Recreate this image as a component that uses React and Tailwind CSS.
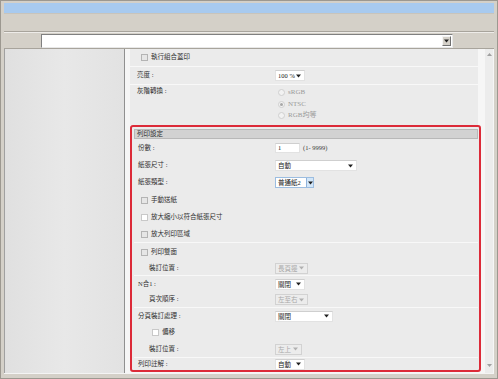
import React from 'react'

const font = { fontFamily: '"Liberation Serif", "Noto Sans CJK TC", serif' }

function Arrow({ disabled }) {
  return (
    <svg width="5" height="4" viewBox="0 0 5 4" className="shrink-0">
      <path d="M0 0.5h5L2.5 3.5z" fill={disabled ? '#b0b0b0' : '#202020'} />
    </svg>
  )
}

function Select({ w, value, disabled, focus }) {
  if (focus) {
    return (
      <div className={`h-[11px] flex items-stretch bg-white border border-[#9cbde0] ${w}`}>
        <span className="flex-1 pl-[2px] leading-[9px] text-[#202020] whitespace-nowrap">{value}</span>
        <span className="w-[7px] shrink-0 flex items-center justify-center bg-[#d2e6f8] border-l border-[#8fb3dc]"><Arrow /></span>
      </div>
    )
  }
  return (
    <div className={`h-[11px] flex items-center justify-between pl-[2px] pr-[3px] border ${disabled ? 'bg-[#ececec] border-[#d2d2d2] text-[#a8a8a8]' : 'bg-white border-[#e2e2e2] border-t-[#cfcfcf] text-[#202020]'} ${w}`}>
      <span className="leading-[9px] whitespace-nowrap">{value}</span>
      <Arrow disabled={disabled} />
    </div>
  )
}

function Check({ white }) {
  return <span className={`w-[7px] h-[7px] shrink-0 border ${white ? 'border-[#c8c8c8] bg-white' : 'border-[#b4b4b4] bg-[#e6e6e6]'}`} />
}

function Radio({ checked, label }) {
  return (
    <div className="h-[11.5px] flex items-center gap-[3px] text-[#9a9a9a] text-[7px]">
      <span className="w-[7px] h-[7px] rounded-full border border-[#d0d0d0] bg-[#f2f2f2] flex items-center justify-center">
        {checked && <span className="w-[3px] h-[3px] rounded-full bg-[#a8a8a8]" />}
      </span>
      <span>{label}</span>
    </div>
  )
}

function Row({ h, label, indent, children, col = 'w-[137px]', pl = 'pl-[4px]' }) {
  return (
    <div className={`flex items-center ${h} ${pl}`}>
      <span className={`${col} shrink-0 text-[#303030] whitespace-nowrap ${indent ? 'pl-[11px]' : ''}`}>{label}</span>
      {children}
    </div>
  )
}

function CheckRow({ h, label, white, indent }) {
  return (
    <div className={`flex items-center ${h} ${indent ? 'pl-[18px]' : 'pl-[7px]'} gap-[2px] text-[#303030]`}>
      <Check white={white} />
      <span className="ml-[1px] whitespace-nowrap">{label}</span>
    </div>
  )
}

export default function App() {
  return (
    <div className="w-[498px] h-[379px] bg-[#d4d0c8] border border-[#9c9890] flex flex-col text-[6.5px] leading-none" style={font}>
      <div className="h-[2px]" />
      <div className="h-[11px] mx-[3px] bg-[#a8caef] border-b border-[#c8c4bc]" />
      <div className="h-[18px] mx-[3px] bg-[#d4d0c8] border-b border-[#a8a49c]" />
      <div className="h-[16px] mx-[3px] flex items-center pl-[37px] pr-[41px] border-t border-white/60">
        <div className="flex-1 h-[14px] bg-white border border-[#808080] border-r-[#e8e8e8] border-b-[#e8e8e8] flex justify-end items-center pr-[1px]">
          <span className="w-[9px] h-[10px] bg-[#d4d0c8] border border-[#f4f4f4] border-r-[#707070] border-b-[#707070] flex items-center justify-center"><Arrow /></span>
        </div>
      </div>
      <div className="flex-1 mx-[3px] flex border-t border-[#a8a49c] min-h-0">
        <div className="w-[121px] bg-gradient-to-r from-[#e0e0e0] via-[#e8e8e8] to-[#e2e2e2] border-l border-[#a0a0a0] border-r border-r-[#909090]" />
        <div className="flex-1 bg-[#f6f6f6] flex">
          <div className="w-[351px] ml-[5px] flex flex-col">
            <div className="w-[348px] bg-[#ebebeb]">
              <div className="h-[18px] flex items-center pl-[11px] gap-[2px] border-b border-[#f8f8f8] text-[#303030]">
                <Check />
                <span className="ml-[1px]">執行組合蓋印</span>
              </div>
              <Row h="h-[18px] border-b border-[#f8f8f8]" label="亮度 :" col="w-[138px]" pl="pl-[7px]">
                <Select w="w-[30px]" value="100 %" />
              </Row>
              <div className="h-[40px] flex pl-[7px] pt-[2px]">
                <span className="w-[138px] shrink-0 text-[#303030] pt-[1px]">灰階轉換 :</span>
                <div className="pl-[3px]">
                  <Radio label="sRGB" />
                  <Radio label="NTSC" checked />
                  <Radio label="RGB均等" />
                </div>
              </div>
            </div>
            <div className="border-2 border-[#dc2a38] rounded-[3px] bg-[#ebebeb] pt-[2px] pl-[2px] pr-[1px]">
              <div className="h-[10px] bg-[#d2d2d2] border border-[#b8b8b8] flex items-center pl-[2px] text-[#303030]">列印設定</div>
              <div className="border-b border-[#f8f8f8]">
                <Row h="h-[18px]" label="份數 :">
                  <span className="w-[25px] h-[10px] bg-white border border-[#e2e2e2] border-t-[#cfcfcf] pl-[2px] leading-[8px] text-[#202020]">1</span>
                  <span className="ml-[3px] text-[#404040]">(1- 9999)</span>
                </Row>
                <Row h="h-[17px]" label="紙張尺寸 :"><Select w="w-[82px]" value="自動" /></Row>
                <Row h="h-[17px]" label="紙張類型 :"><Select w="w-[39px]" value="普通紙2" focus /></Row>
                <CheckRow h="h-[18px]" label="手動送紙" />
                <CheckRow h="h-[17px]" label="放大縮小以符合紙張尺寸" white />
                <CheckRow h="h-[16px]" label="放大列印區域" />
              </div>
              <div className="border-b border-[#f8f8f8]">
                <CheckRow h="h-[18px]" label="列印雙面" />
                <Row h="h-[14px]" label="裝訂位置 :" indent><Select w="w-[33px]" value="長頁邊" disabled /></Row>
              </div>
              <div className="border-b border-[#f8f8f8]">
                <Row h="h-[16px]" label="N合1 :"><Select w="w-[30px]" value="關閉" /></Row>
                <Row h="h-[15px]" label="頁次順序 :" indent><Select w="w-[33px]" value="左至右" disabled /></Row>
              </div>
              <div className="border-b border-[#f8f8f8]">
                <Row h="h-[16px]" label="分頁裝訂處理 :"><Select w="w-[58px]" value="關閉" /></Row>
                <CheckRow h="h-[17px]" label="偏移" white indent />
                <Row h="h-[16px]" label="裝訂位置 :" indent><Select w="w-[27px]" value="左上" disabled /></Row>
              </div>
              <Row h="h-[12px]" label="列印註解 :"><Select w="w-[30px]" value="自動" /></Row>
            </div>
          </div>
          <div className="w-[4px]" />
          <div className="w-[8px] bg-[#ececec] flex flex-col justify-between items-center py-[4px] pb-[6px]">
            <svg width="5" height="3" viewBox="0 0 5 3"><path d="M0 3h5L2.5 0z" fill="#a0a0a0" /></svg>
            <svg width="5" height="3" viewBox="0 0 5 3"><path d="M0 0h5L2.5 3z" fill="#a0a0a0" /></svg>
          </div>
          <div className="flex-1" />
        </div>
      </div>
      <div className="h-[5px] mx-[3px] border-t border-[#f4f4f4]" />
    </div>
  )
}
